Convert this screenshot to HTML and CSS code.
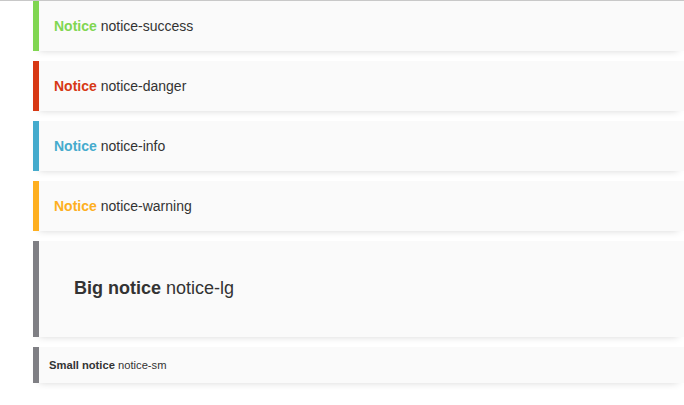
FILE: index.html
```html
<!DOCTYPE html>
<html>
<head>
<meta charset="utf-8">
<link rel="stylesheet" href="styles.css">
</head>
<body>
<div class="topline"></div>
<div class="container">
  <div class="notice notice-success"><strong>Notice</strong> notice-success</div>
  <div class="notice notice-danger"><strong>Notice</strong> notice-danger</div>
  <div class="notice notice-info"><strong>Notice</strong> notice-info</div>
  <div class="notice notice-warning"><strong>Notice</strong> notice-warning</div>
  <div class="notice notice-lg"><strong>Big notice</strong> notice-lg</div>
  <div class="notice notice-sm"><strong>Small notice</strong> notice-sm</div>
</div>
</body>
</html>
```
FILE: styles.css
```css
html, body {
  margin: 0;
  padding: 0;
  background: #fff;
}
body {
  font-family: "Liberation Sans", Arial, Helvetica, sans-serif;
  font-size: 14px;
  line-height: 1.42857143;
  color: #333;
}
.topline {
  height: 1px;
  background: #c8c8c8;
}
.container {
  padding-left: 33px;
}
.notice {
  padding: 15px;
  background-color: #fafafa;
  border-left: 6px solid #7f7f84;
  margin-bottom: 10px;
  box-shadow: 0 5px 8px -6px rgba(0,0,0,.2);
}
.notice-sm {
  padding: 10px;
  font-size: 80%;
}
.notice-lg {
  padding: 35px;
  font-size: 18px;
}
.notice-success { border-color: #80D651; }
.notice-success > strong { color: #80D651; }
.notice-info { border-color: #45ABCD; }
.notice-info > strong { color: #45ABCD; }
.notice-warning { border-color: #FEAF20; }
.notice-warning > strong { color: #FEAF20; }
.notice-danger { border-color: #d73814; }
.notice-danger > strong { color: #d73814; }
```
